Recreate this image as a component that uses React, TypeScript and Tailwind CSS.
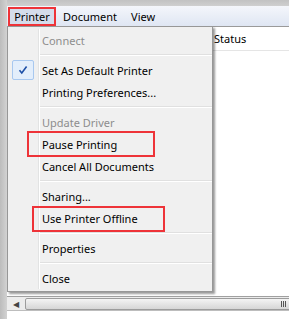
import React from 'react';

type Item = { label: string; disabled?: boolean; checked?: boolean; boxed?: boolean } | 'sep';

const items: Item[] = [
  { label: 'Connect', disabled: true },
  'sep',
  { label: 'Set As Default Printer', checked: true },
  { label: 'Printing Preferences...' },
  'sep',
  { label: 'Update Driver', disabled: true },
  { label: 'Pause Printing', boxed: true },
  { label: 'Cancel All Documents' },
  'sep',
  { label: 'Sharing...' },
  { label: 'Use Printer Offline', boxed: true },
  'sep',
  { label: 'Properties' },
  'sep',
  { label: 'Close' },
];

const CheckMark = () => (
  <svg width="10" height="10" viewBox="0 0 10 10">
    <path d="M1.5 5.2 L3.8 8 L8.6 1.5" fill="none" stroke="#1d4fa6" strokeWidth="1.6" />
  </svg>
);

const MenuRow = ({ item }: { item: Exclude<Item, 'sep'> }) => (
  <div className="relative flex h-[22px] items-center">
    <div className="flex w-[30px] items-center justify-center">
      {item.checked && (
        <div className="flex h-[20px] w-[22px] items-center justify-center rounded-[2px] border border-[#a8c8ef] bg-[#e3eefb]">
          <CheckMark />
        </div>
      )}
    </div>
    <span className={`pl-[4px] ${item.disabled ? 'text-[#8d8d8d]' : 'text-black'}`}>{item.label}</span>
    {item.boxed && (
      <div
        className={`absolute border-2 border-[#ee3338] ${
          item.label === 'Pause Printing'
            ? 'left-[19px] top-[-2px] h-[26px] w-[128px]'
            : 'left-[24px] top-[-1px] h-[26px] w-[133px]'
        }`}
      />
    )}
  </div>
);

const Separator = () => (
  <div className="flex h-[8px] items-center pl-[30px]">
    <div className="h-[2px] w-full border-t border-[#e0e0e0] border-b-white" style={{ borderBottomWidth: 1 }} />
  </div>
);

export default function App() {
  return (
    <div className="relative flex h-[319px] w-[289px] overflow-hidden bg-white text-[11px] font-['Noto_Sans',sans-serif] leading-none">
      {/* window frame, left */}
      <div className="w-[7px] bg-gradient-to-r from-[#bcbcbc] to-[#d2d2d2]" />

      <div className="flex flex-1 flex-col">
        <div className="h-[6px] bg-gradient-to-b from-[#c2c2c2] to-[#cfcfcf]" />

        {/* menu bar */}
        <div className="flex h-[20px] items-center bg-gradient-to-b from-[#f4f6fb] to-[#dfe6f3] pl-[1px]">
          <div className="flex h-[19px] w-[48px] items-center justify-center border-2 border-[#ee3338] bg-[#d5dceb]">Printer</div>
          <span className="ml-[7px]">Document</span>
          <span className="ml-[14px]">View</span>
        </div>

        {/* list view */}
        <div className="flex flex-1 flex-col border-t border-[#9a9a9a]">
          <div className="flex h-[24px] items-center border-b border-[#e5e5e5] bg-white pl-[207px]">Status</div>
          <div className="flex-1 bg-white" />
          {/* horizontal scrollbar */}
          <div className="flex h-[14px] items-center border-t border-[#a0a0a0] bg-[#ececec]">
            <div className="flex w-[18px] items-center justify-center text-[8px] text-[#444]">◀</div>
            <div className="relative mr-[-2px] flex h-[12px] flex-1 items-center justify-end rounded-[2px] border border-[#9c9c9c] bg-gradient-to-b from-[#f4f4f4] to-[#d6d6d6] pr-[4px]">
              <div className="flex gap-[1px]">
                <div className="h-[6px] w-[1px] bg-[#555]" />
                <div className="h-[6px] w-[1px] bg-[#555]" />
                <div className="h-[6px] w-[1px] bg-[#555]" />
              </div>
            </div>
          </div>
          <div className="h-[9px] border-t border-[#bdbdbd] bg-white" />
        </div>
      </div>

      {/* dropdown menu */}
      <div className="absolute left-[7px] top-[26px] w-[206px] border border-[#979797] bg-[#f0f0f0] py-[2px] shadow-[2px_2px_2px_rgba(0,0,0,0.4)]">
        <div className="absolute bottom-[2px] left-[30px] top-[2px] w-[2px] border-l border-[#e2e3e3] border-r-white" style={{ borderRightWidth: 1 }} />
        {items.map((it, i) => (it === 'sep' ? <Separator key={i} /> : <MenuRow key={i} item={it} />))}
      </div>
    </div>
  );
}
